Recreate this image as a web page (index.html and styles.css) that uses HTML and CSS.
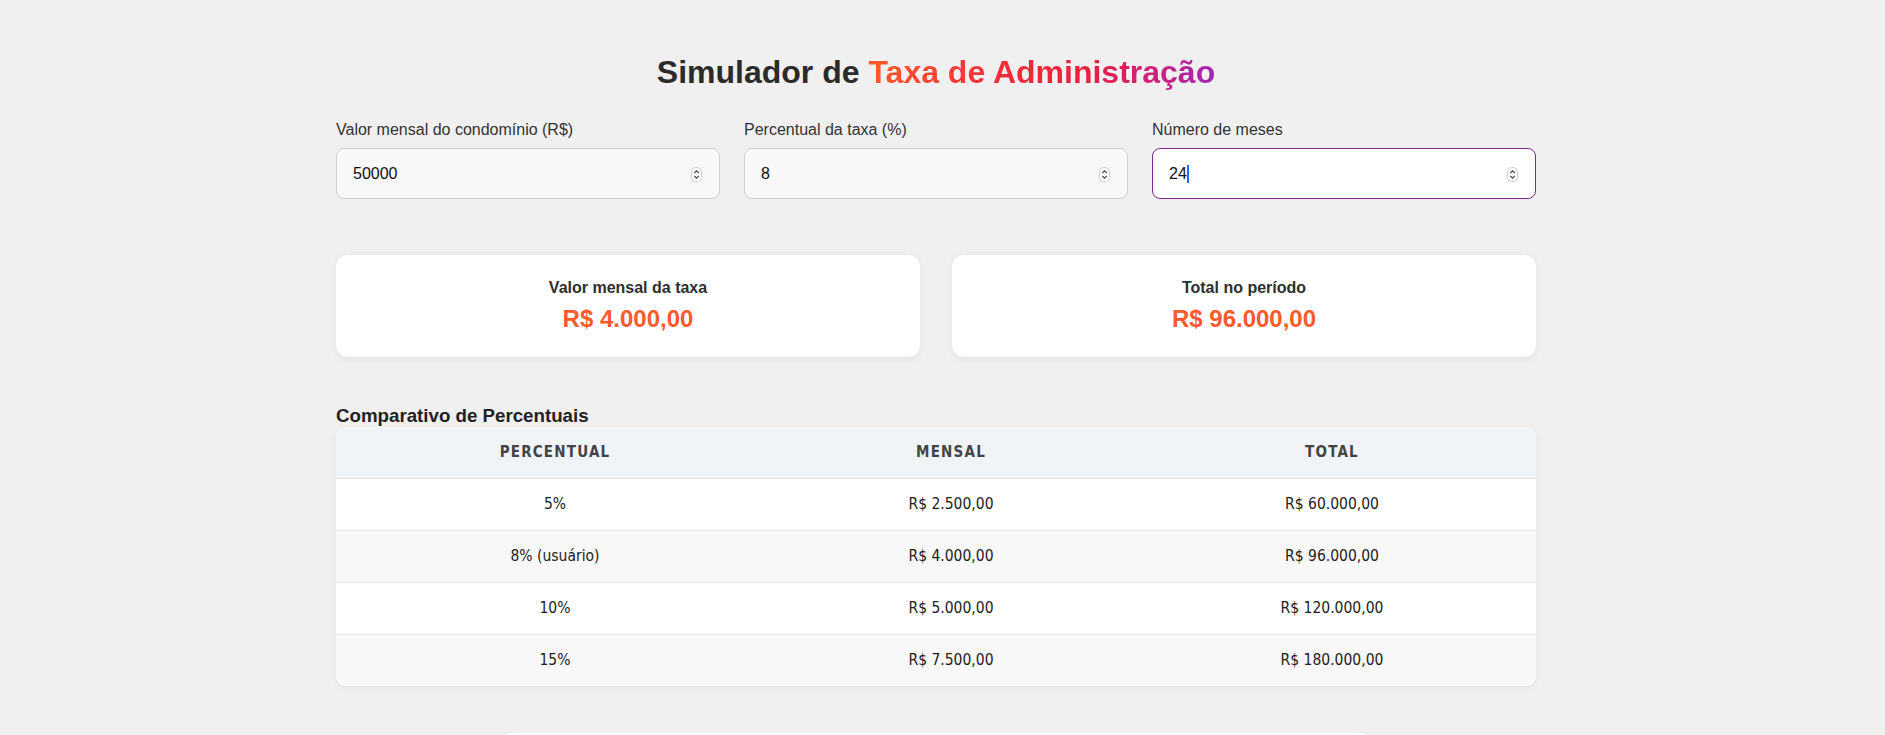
FILE: index.html
```html
<!DOCTYPE html>
<html lang="pt-BR">
<head>
<meta charset="utf-8">
<title>Simulador de Taxa de Administração</title>
<link rel="stylesheet" href="styles.css">
</head>
<body>
<main class="page">
  <h1 class="title">Simulador de <span class="grad">Taxa de Administração</span></h1>

  <section class="inputs">
    <div class="field">
      <label class="label" for="valor">Valor mensal do condomínio (R$)</label>
      <div class="control">
        <input class="num" id="valor" type="number" value="50000">
        <svg class="spin" width="11" height="15" viewBox="0 0 11 15"><rect x="0.5" y="0.5" width="10" height="14" rx="4" fill="#fff" stroke="#cfcfcf"/><path d="M3.2 6.2 5.5 3.9 7.8 6.2" fill="none" stroke="#444" stroke-width="1.2"/><path d="M3.2 8.8 5.5 11.1 7.8 8.8" fill="none" stroke="#444" stroke-width="1.2"/></svg>
      </div>
    </div>
    <div class="field">
      <label class="label" for="perc">Percentual da taxa (%)</label>
      <div class="control">
        <input class="num" id="perc" type="number" value="8">
        <svg class="spin" width="11" height="15" viewBox="0 0 11 15"><rect x="0.5" y="0.5" width="10" height="14" rx="4" fill="#fff" stroke="#cfcfcf"/><path d="M3.2 6.2 5.5 3.9 7.8 6.2" fill="none" stroke="#444" stroke-width="1.2"/><path d="M3.2 8.8 5.5 11.1 7.8 8.8" fill="none" stroke="#444" stroke-width="1.2"/></svg>
      </div>
    </div>
    <div class="field">
      <label class="label" for="meses">Número de meses</label>
      <div class="control">
        <input class="num active" id="meses" type="number" value="24">
        <span class="caret"></span>
        <svg class="spin" width="11" height="15" viewBox="0 0 11 15"><rect x="0.5" y="0.5" width="10" height="14" rx="4" fill="#fff" stroke="#cfcfcf"/><path d="M3.2 6.2 5.5 3.9 7.8 6.2" fill="none" stroke="#444" stroke-width="1.2"/><path d="M3.2 8.8 5.5 11.1 7.8 8.8" fill="none" stroke="#444" stroke-width="1.2"/></svg>
      </div>
    </div>
  </section>

  <section class="results">
    <div class="card">
      <div class="card-label">Valor mensal da taxa</div>
      <div class="card-value">R$ 4.000,00</div>
    </div>
    <div class="card">
      <div class="card-label">Total no período</div>
      <div class="card-value">R$ 96.000,00</div>
    </div>
  </section>

  <h3 class="section-title">Comparativo de Percentuais</h3>
  <table class="table">
    <colgroup><col class="c1"><col class="c2"><col class="c3"></colgroup>
    <thead>
      <tr><th>Percentual</th><th>Mensal</th><th>Total</th></tr>
    </thead>
    <tbody>
      <tr><td>5%</td><td>R$ 2.500,00</td><td>R$ 60.000,00</td></tr>
      <tr><td>8% (usuário)</td><td>R$ 4.000,00</td><td>R$ 96.000,00</td></tr>
      <tr><td>10%</td><td>R$ 5.000,00</td><td>R$ 120.000,00</td></tr>
      <tr><td>15%</td><td>R$ 7.500,00</td><td>R$ 180.000,00</td></tr>
    </tbody>
  </table>

  <div class="tail"></div>
</main>
</body>
</html>
```
FILE: styles.css
```css
html {
  overflow: hidden;
}
body {
  margin: 0;
  padding: 0 13px 0 0;
  background: #f0f0f0;
  font-family: "Liberation Sans", Arial, Helvetica, sans-serif;
  color: #333;
}
.page {
  width: 1200px;
  margin: 0 auto;
  padding-top: 54px;
}
.title {
  margin: 0;
  font-size: 32px;
  line-height: 36px;
  font-weight: 700;
  text-align: center;
  color: #2b2b2b;
}
.grad {
  background: linear-gradient(90deg, #ff5a2a 0%, #f5303a 35%, #ec1f3c 62%, #d0217a 82%, #a128b4 100%);
  -webkit-background-clip: text;
  background-clip: text;
  color: transparent;
}
.inputs {
  display: grid;
  grid-template-columns: repeat(3, 1fr);
  gap: 24px;
  margin-top: 31px;
}
.field {
  display: flex;
  flex-direction: column;
  gap: 9px;
}
.label {
  font-size: 16px;
  line-height: 18px;
  color: #333;
}
.control {
  position: relative;
}
.num {
  box-sizing: border-box;
  width: 100%;
  height: 51px;
  padding: 0 16px;
  border: 1px solid #cfcfcf;
  border-radius: 8px;
  background: #f8f8f8;
  font-family: "Liberation Sans", Arial, Helvetica, sans-serif;
  font-size: 16px;
  color: #111;
  outline: none;
  -moz-appearance: textfield;
}
.num::-webkit-inner-spin-button,
.num::-webkit-outer-spin-button {
  -webkit-appearance: none;
  margin: 0;
}
.num.active {
  border-color: #7a2a90;
  background: #fff;
}
.spin {
  position: absolute;
  right: 18px;
  top: 19px;
}
.caret {
  position: absolute;
  left: 35px;
  top: 17px;
  width: 2px;
  height: 18px;
  background: #1a6cf0;
}
.results {
  display: grid;
  grid-template-columns: 1fr 1fr;
  gap: 32px;
  margin-top: 56px;
}
.card {
  background: #fff;
  border-radius: 12px;
  padding: 24px 16px;
  text-align: center;
  box-shadow: 0 2px 8px rgba(0, 0, 0, 0.06);
  display: flex;
  flex-direction: column;
  gap: 8px;
}
.card-label {
  font-size: 16px;
  line-height: 18px;
  font-weight: 700;
  color: #2e2e2e;
}
.card-value {
  font-size: 24px;
  line-height: 28px;
  font-weight: 700;
  color: #ff5a2c;
}
.section-title {
  margin: 48px 0 0;
  font-size: 18.72px;
  line-height: 22px;
  font-weight: 700;
  color: #222;
}
.table {
  width: 100%;
  table-layout: fixed;
  border-collapse: separate;
  border-spacing: 0;
  background: #fff;
  border-radius: 10px;
  overflow: hidden;
  box-shadow: 0 2px 8px rgba(0, 0, 0, 0.05);
  font-family: "DejaVu Sans Condensed", "DejaVu Sans", Tahoma, sans-serif;
  font-stretch: condensed;
}
.c1 { width: 438px; }
.c2 { width: 354px; }
.c3 { width: 408px; }
.table th,
.table td {
  padding: 16px 8px;
  line-height: 19px;
  text-align: center;
  border-bottom: 1px solid #e4e4e4;
}
.table th {
  background: #f1f4f7;
  font-size: 15px;
  font-weight: 700;
  letter-spacing: 1.2px;
  text-transform: uppercase;
  color: #444;
}
.table td {
  font-size: 15.5px;
  color: #222;
}
.table tbody tr:nth-child(even) td {
  background: #f8f8f8;
}
.table tbody tr:last-child td {
  border-bottom: none;
}
.tail {
  width: 874px;
  height: 80px;
  margin: 47px auto 0;
  background: #fff;
  border-radius: 12px;
  box-shadow: 0 2px 8px rgba(0, 0, 0, 0.04);
}
```
